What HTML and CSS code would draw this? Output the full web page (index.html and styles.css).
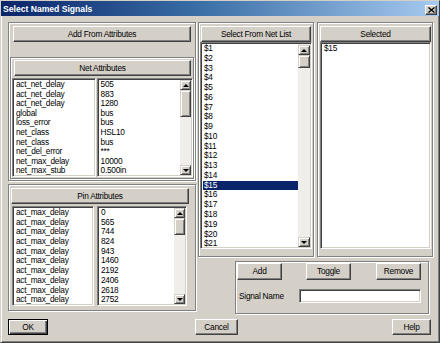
FILE: index.html
```html
<!DOCTYPE html>
<html>
<head>
<meta charset="utf-8">
<link rel="stylesheet" href="styles.css">
</head>
<body>
<div class="win">
  <div class="title">
    <span class="ttext">Select Named Signals</span>
    <div class="close"><svg width="7" height="6" viewBox="0 0 7 6"><path d="M0.5 0.5 L6.5 5.5 M6.5 0.5 L0.5 5.5" stroke="#000" stroke-width="1.4" fill="none"/></svg></div>
  </div>
  <div class="content">
    <div class="cols">
      <div class="leftcol">
        <div class="grp g-add">
          <div class="btn b-add">Add From Attributes</div>
          <div class="grp g-net">
            <div class="btn b-net">Net Attributes</div>
            <div class="pair p-net">
              <div class="lb l-names">
                <div class="items">
                  <div class="row">act_net_delay</div>
                  <div class="row">act_net_delay</div>
                  <div class="row">act_net_delay</div>
                  <div class="row">global</div>
                  <div class="row">loss_error</div>
                  <div class="row">net_class</div>
                  <div class="row">net_class</div>
                  <div class="row">net_del_error</div>
                  <div class="row">net_max_delay</div>
                  <div class="row">net_max_stub</div>
                </div>
              </div>
              <div class="lb l-vals">
                <div class="items">
                  <div class="row">505</div>
                  <div class="row">883</div>
                  <div class="row">1280</div>
                  <div class="row">bus</div>
                  <div class="row">bus</div>
                  <div class="row">HSL10</div>
                  <div class="row">bus</div>
                  <div class="row">***</div>
                  <div class="row">10000</div>
                  <div class="row">0.500in</div>
                </div>
                <div class="sb sb-net">
                  <div class="arr"><span class="tri up"></span></div>
                  <div class="thumb"></div>
                  <div class="track"></div>
                  <div class="arr"><span class="tri dn"></span></div>
                </div>
              </div>
            </div>
          </div>
        </div>
        <div class="grp g-pin">
          <div class="btn b-pin">Pin Attributes</div>
          <div class="pair p-pin">
            <div class="lb l-names">
              <div class="items pin">
                <div class="row">act_max_delay</div>
                <div class="row">act_max_delay</div>
                <div class="row">act_max_delay</div>
                <div class="row">act_max_delay</div>
                <div class="row">act_max_delay</div>
                <div class="row">act_max_delay</div>
                <div class="row">act_max_delay</div>
                <div class="row">act_max_delay</div>
                <div class="row">act_max_delay</div>
                <div class="row">act_max_delay</div>
              </div>
            </div>
            <div class="lb l-vals">
              <div class="items pin">
                <div class="row">0</div>
                <div class="row">565</div>
                <div class="row">744</div>
                <div class="row">824</div>
                <div class="row">943</div>
                <div class="row">1460</div>
                <div class="row">2192</div>
                <div class="row">2406</div>
                <div class="row">2618</div>
                <div class="row">2752</div>
              </div>
              <div class="sb sb-pin">
                <div class="arr"><span class="tri up"></span></div>
                <div class="thumb"></div>
                <div class="track"></div>
                <div class="arr"><span class="tri dn"></span></div>
              </div>
            </div>
          </div>
        </div>
      </div>
      <div class="rightcol">
        <div class="toprow">
          <div class="grp g-col">
            <div class="btn b-col">Select From Net List</div>
            <div class="lb l-big">
              <div class="items big">
                <div class="row">$1</div>
                <div class="row">$2</div>
                <div class="row">$3</div>
                <div class="row">$4</div>
                <div class="row">$5</div>
                <div class="row">$6</div>
                <div class="row">$7</div>
                <div class="row">$8</div>
                <div class="row">$9</div>
                <div class="row">$10</div>
                <div class="row">$11</div>
                <div class="row">$12</div>
                <div class="row">$13</div>
                <div class="row">$14</div>
                <div class="row sel">$15</div>
                <div class="row">$16</div>
                <div class="row">$17</div>
                <div class="row">$18</div>
                <div class="row">$19</div>
                <div class="row">$20</div>
                <div class="row">$21</div>
              </div>
              <div class="sb sb-big">
                <div class="arr"><span class="tri up"></span></div>
                <div class="thumb"></div>
                <div class="track"></div>
                <div class="arr"><span class="tri dn"></span></div>
              </div>
            </div>
          </div>
          <div class="grp g-col g-sel">
            <div class="btn b-col">Selected</div>
            <div class="lb l-big">
              <div class="items big">
                <div class="row">$15</div>
              </div>
            </div>
          </div>
        </div>
        <div class="grp g-act">
          <div class="actrow">
            <div class="btn b-sm b-addsig">Add</div>
            <div class="btn b-sm b-toggle">Toggle</div>
            <div class="btn b-sm b-remove">Remove</div>
          </div>
          <div class="namerow">
            <span class="lbl">Signal Name</span>
            <div class="input"></div>
          </div>
        </div>
      </div>
    </div>
    <div class="foot">
      <div class="btn b-ok">OK</div>
      <div class="btn b-cancel">Cancel</div>
      <div class="btn b-help">Help</div>
    </div>
  </div>
</div>
</body>
</html>
```

FILE: styles.css
```css
* { box-sizing: border-box; margin: 0; padding: 0; }
html, body { width: 440px; height: 343px; overflow: hidden; background: #d4d0c8; }
body { font-family: "Liberation Sans", Arial, sans-serif; font-size: 8.3px; letter-spacing: -0.25px; color: #000; }

.win {
  width: 440px; height: 343px;
  border: 1px solid; border-color: #d4d0c8 #404040 #404040 #d4d0c8;
  box-shadow: inset 1px 1px #fff, inset -1px -1px #808080;
  display: flex; flex-direction: column;
}

.title {
  height: 15px;
  background: linear-gradient(to right, #0a246a 0%, #3a6ea5 45%, #a6caf0 100%);
  display: flex; align-items: center;
}
.ttext { color: #fff; font-weight: bold; font-size: 8.6px; letter-spacing: 0; padding-left: 2px; }
.close {
  margin-left: auto; margin-right: 2px; margin-top: 2px;
  width: 12px; height: 10px; background: #d4d0c8;
  border: 1px solid; border-color: #fff #404040 #404040 #fff;
  box-shadow: inset -1px -1px #808080;
  display: flex; align-items: center; justify-content: center;
}
.close svg { display: block; }

.content { padding: 6px 6px 0 7px; display: flex; flex-direction: column; }
.cols { display: flex; gap: 2px; height: 292px; }

.grp { border: 1px solid #808080; box-shadow: inset 1px 1px #fff, 1px 1px #fff; }

.btn {
  background: #d4d0c8; height: 16px;
  border: 1px solid; border-color: #fff #404040 #404040 #fff;
  box-shadow: inset -1px -1px #808080;
  display: flex; align-items: center; justify-content: center;
  white-space: nowrap; line-height: 1;
}

.lb {
  background: #fff;
  border: 1px solid; border-color: #808080 #fff #fff #808080;
  box-shadow: inset 1px 1px #404040, inset -1px -1px #d4d0c8;
  padding: 1px; display: flex; overflow: hidden;
}
.items { flex: 1; min-width: 0; overflow: hidden; padding-left: 2px; }
.row { height: 9.6px; line-height: 9.6px; white-space: nowrap; }
.items.pin .row { height: 9.7px; line-height: 9.7px; }
.items.big { padding-left: 1px; }
.items.big .row { height: 9.78px; line-height: 9.78px; padding-left: 1px; }
.row.sel { background: #0a246a; color: #fff; }

.sb { width: 11px; display: flex; flex-direction: column; background: #efeeea; }
.arr {
  height: 10px; background: #d4d0c8;
  border: 1px solid; border-color: #d4d0c8 #404040 #404040 #d4d0c8;
  box-shadow: inset 1px 1px #fff, inset -1px -1px #808080;
  display: flex; align-items: center; justify-content: center;
}
.thumb {
  background: #d4d0c8;
  border: 1px solid; border-color: #d4d0c8 #404040 #404040 #d4d0c8;
  box-shadow: inset 1px 1px #fff, inset -1px -1px #808080;
}
.track { flex: 1; }
.tri { width: 0; height: 0; border-left: 3px solid transparent; border-right: 3px solid transparent; }
.tri.up { border-bottom: 3px solid #000; }
.tri.dn { border-top: 3px solid #000; }

/* left column */
.leftcol { width: 188px; display: flex; flex-direction: column; gap: 3px; }
.g-add { height: 159px; }
.b-add { margin: 3px 4px 0 4px; }
.g-net { margin: 15px 1px 0 1px; height: 122px; }
.b-net { margin: 2px 2px 0 3px; }
.pair { display: flex; }
.p-net { margin: 2px 0 0 1px; height: 99px; gap: 1px; }
.p-net .l-names { width: 84px; }
.p-net .l-vals { width: 97px; }
.sb-net .thumb { height: 27px; }

.g-pin { height: 127px; }
.b-pin { margin: 3px 6px 0 2px; }
.p-pin { margin: 2px 0 0 3px; height: 100px; gap: 3px; }
.p-pin .l-names { width: 82px; }
.p-pin .l-vals { width: 90px; }
.sb-pin .thumb { height: 17px; }

/* right side */
.rightcol { width: 235px; display: flex; flex-direction: column; }
.toprow { display: flex; gap: 3px; height: 235px; }
.g-col { width: 116px; display: flex; flex-direction: column; }
.b-col { margin: 3px 2px 0 2px; flex: none; }
.g-col .l-big { margin: 0 1px; height: 207px; }
.g-sel .b-col { margin: 3px 1px 0 2px; }
.g-sel .l-big { margin: 0 1px 0 2px; }
.sb-big { width: 12px; padding-top: 1px; }
.sb-big .thumb { height: 13px; }

.g-act { margin: 4px 0 0 37px; width: 194px; height: 53px; }
.actrow { display: flex; margin-top: 1px; padding-left: 1px; }
.b-sm { width: 45px; height: 17px; }
.b-toggle { margin-left: 24px; }
.b-remove { margin-left: 25px; }
.namerow { display: flex; align-items: center; margin-top: 9px; padding-left: 3px; }
.lbl { width: 60px; white-space: nowrap; }
.input {
  width: 122px; height: 14px; background: #fff;
  border: 1px solid; border-color: #808080 #fff #fff #808080;
  box-shadow: inset 1px 1px #404040, inset -1px -1px #d4d0c8;
}

.foot { display: flex; margin-top: 5px; }
.b-ok { width: 40px; height: 16px; border: 1px solid #000; box-shadow: inset 1px 1px #fff, inset -1px -1px #404040, inset -2px -2px #808080; }
.b-cancel { width: 43px; margin-left: 147px; }
.b-help { width: 39px; margin-left: auto; margin-right: 2px; }
```
